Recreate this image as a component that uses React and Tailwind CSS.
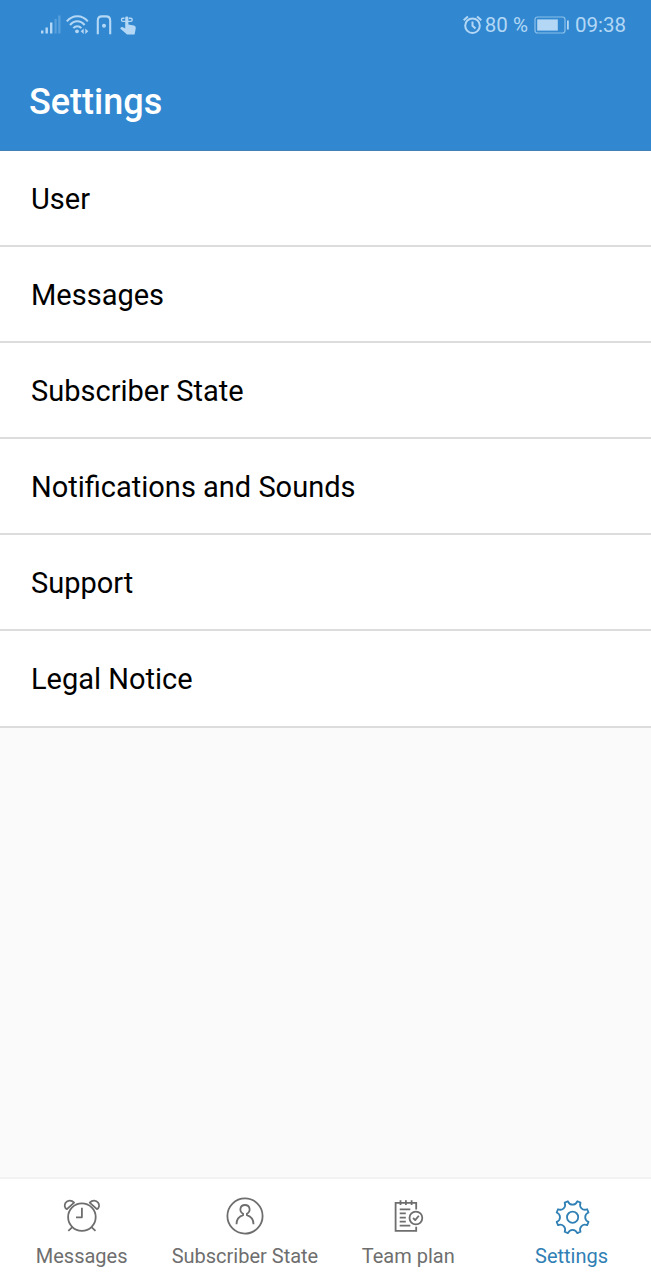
import React, { useState } from 'react';

const entries = ['User', 'Messages', 'Subscriber State', 'Notifications and Sounds', 'Support', 'Legal Notice'];

// Outline of a cog with eight teeth around the given centre
const cogPath = (cx, cy, outer, inner) => {
    const point = (radius, degrees) => {
        const angle = (degrees * Math.PI) / 180;
        return `${(cx + radius * Math.sin(angle)).toFixed(2)} ${(cy - radius * Math.cos(angle)).toFixed(2)}`;
    };
    let path = '';
    for (let tooth = 22.5; tooth < 360; tooth += 45) {
        path += `${path ? 'L' : 'M'}${point(outer, tooth - 6)}L${point(outer, tooth + 6)}`;
        path += `C${point(inner, tooth + 9)} ${point(inner, tooth + 36)} ${point(outer, tooth + 39)}`;
    }
    return `${path}Z`;
};

const TabIcon = ({ children }) => (
    <svg width="40" height="40" viewBox="0 0 40 40" fill="none" stroke="currentColor" strokeWidth="1.8" strokeLinejoin="round">
        {children}
    </svg>
);

const ClockIcon = () => (
    <TabIcon>
        <circle cx="19.9" cy="21.1" r="13.8" />
        <path d="M19.9 11.7V21.3H14M10.6 30.9L6.3 34.8M29.2 30.9L33.5 34.8" />
        <path d="M4.9 13.2L12.1 6.6C9.4 3.9 5.6 4.2 3.6 6.8C2 9.1 2.5 12 4.9 13.2Z" />
        <path d="M34.9 13.2L27.7 6.6C30.4 3.9 34.2 4.2 36.2 6.8C37.8 9.1 37.3 12 34.9 13.2Z" />
    </TabIcon>
);

const PersonIcon = () => (
    <TabIcon>
        <circle cx="20" cy="20" r="17.6" />
        <path d="M11.5 28.3C11.5 23.7 13.9 20.5 18.1 19.2V17.8C13.7 15.3 14.9 9 20 9C25.1 9 26.3 15.3 21.9 17.8V19.2C26.1 20.5 28.5 23.7 28.5 28.3" />
    </TabIcon>
);

const PlanIcon = () => (
    <TabIcon>
        <path d="M28.2 13.6V6.8H7.6V34.8H28.2V30.8" strokeLinejoin="miter" />
        <path d="M12.5 4.3V9M17.9 4.3V9M23.6 4.3V9" />
        <path d="M11.7 13.4H22.3M11.7 17.4H17.8M11.7 21.6H17.8M11.7 25.6H17.8M11.7 29.7H22.3" />
        <circle cx="27.9" cy="22" r="6.4" />
        <path d="M25.1 22L27.2 24.1L30.8 19.7" />
    </TabIcon>
);

const CogIcon = () => (
    <TabIcon>
        <path d={cogPath(20.6, 21.2, 16.6, 11.8)} />
        <circle cx="20.6" cy="21.2" r="5.6" />
    </TabIcon>
);

const tabs = [
    { name: 'Messages', Icon: ClockIcon },
    { name: 'Subscriber State', Icon: PersonIcon },
    { name: 'Team plan', Icon: PlanIcon },
    { name: 'Settings', Icon: CogIcon },
];

const StatusBar = () => (
    <div className="flex h-[50px] items-center justify-between pl-10 pr-[25px] text-[#b3d7f5]">
        <div className="flex items-center gap-[5px]">
            {/* Signal strength */}
            <svg width="21" height="22" viewBox="0 0 21 22" fill="currentColor">
                <path d="M1 16.5h2.4v3H1zM5.5 13.5h2.4v6H5.5zM10 8.5h2.4v11H10z" />
                <path d="M14.5 5h2.2v14.5h-2.2zM18.2 1.5h2.3v18h-2.3z" opacity="0.3" />
            </svg>
            {/* Wifi */}
            <svg width="23" height="22" viewBox="0 0 23 22" fill="none" stroke="currentColor" strokeWidth="2">
                <path d="M.8 7.3C6.5.4 16.2.4 21.8 7.3M4 11C8.2 6 14.4 6 18.6 11M7.3 14.2C9.7 11.5 13 11.5 15.4 14.2" />
                <circle cx="11" cy="17.3" r="1.9" fill="currentColor" stroke="none" />
                <path d="M17.7 14.5v5.6L14.7 17.3zM19.3 14.5v5.6l3-2.8z" fill="currentColor" stroke="none" />
            </svg>
            <svg width="20" height="22" viewBox="0 0 20 22" fill="none" stroke="currentColor" strokeWidth="2.1">
                <path d="M3.8 20.2V6.8Q3.8 2.4 8 2.4H12Q16.2 2.4 16.2 6.8V20.2" />
                <circle cx="10" cy="11.8" r="2" fill="currentColor" stroke="none" />
            </svg>
            {/* Touch gesture */}
            <svg width="18" height="22" viewBox="0 0 18 22" fill="currentColor">
                <path d="M6.2 3.6C6.2 2 9.4 2 9.4 3.6V10.4L15 11.6Q17 12.2 16.8 14L15.6 20.6H8L1.2 14.5Q2.3 12.3 4.5 13.4L6.2 14.4Z" />
                <path d="M6.5 7.4H3.8Q2.5 7.4 2.5 5.8T3.8 4.2H5.5M9 7.4H11.8Q13.2 7.4 13.2 5.8T11.8 4.2H10" fill="none" stroke="currentColor" strokeWidth="1.4" />
            </svg>
        </div>
        <div className="flex items-center text-[20.5px] leading-none">
            <svg width="20" height="20" viewBox="0 0 20 20" fill="none" stroke="currentColor" strokeWidth="2">
                <circle cx="10.5" cy="10.7" r="7.3" />
                <path d="M10.5 6.4V10.7L13.5 13.5M1.7 5.2L5.9 1.4M19.3 5.2L15.1 1.4" />
            </svg>
            <span className="ml-[3px]">80 %</span>
            <svg className="ml-[6px]" width="36" height="18" viewBox="0 0 36 18" fill="none">
                <rect x="1" y="1" width="30" height="16" rx="2.5" stroke="currentColor" strokeWidth="1.2" opacity="0.7" />
                <rect x="3.2" y="3.4" width="20.6" height="11.2" fill="currentColor" />
                <path d="M33 4.5h1.8v9H33z" fill="currentColor" />
            </svg>
            <span className="ml-[5px]">09:38</span>
        </div>
    </div>
);

const App = () => {
    const [activeTab, setActiveTab] = useState('Settings');

    return (
        <div className="flex h-[1280px] w-[651px] flex-col overflow-hidden bg-[#fafafa] font-['Roboto',sans-serif]">
            <header className="h-[151px] shrink-0 border-b border-[#4181b4] bg-[#3188d0]">
                <StatusBar />
                <h1 className="flex h-[100px] items-center pl-[29px] pt-[3px] text-[36px] font-medium text-white">Settings</h1>
            </header>
            <ul className="bg-white">
                {entries.map((entry) => (
                    <li key={entry} className="flex h-[96.1px] items-center border-b-2 border-[#dcdcdc] pl-[31px] pt-[3px] text-[29px] text-black">
                        {entry}
                    </li>
                ))}
            </ul>
            <nav className="mt-auto flex h-[103px] shrink-0 border-t-2 border-[#f2f2f2] bg-white">
                {tabs.map(({ name, Icon }) => (
                    <button
                        key={name}
                        className={`flex w-[163.3px] shrink-0 flex-col items-center pt-[17px] ${activeTab === name ? 'text-[#3080b5]' : 'text-[#6e6e6e]'}`}
                        onClick={() => setActiveTab(name)}
                    >
                        <Icon />
                        <span className="mt-[6px] text-[20px] leading-7">{name}</span>
                    </button>
                ))}
            </nav>
        </div>
    );
};

export default App;
